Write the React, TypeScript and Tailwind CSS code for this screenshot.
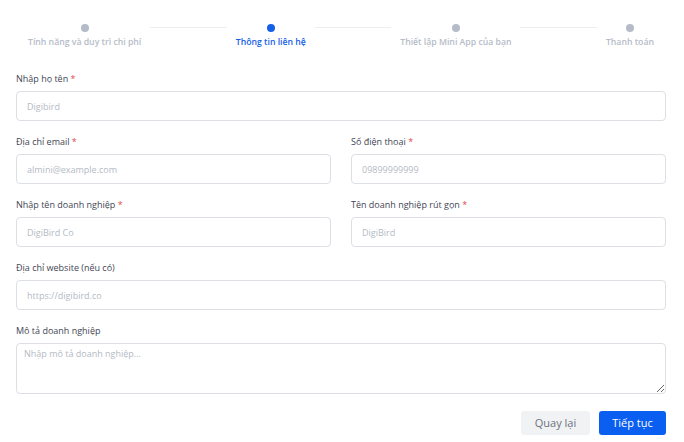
const steps = [
  { label: "Tính năng và duy trì chi phí", active: false },
  { label: "Thông tin liên hệ", active: true },
  { label: "Thiết lập Mini App của bạn", active: false },
  { label: "Thanh toán", active: false },
];

function Field({
  label,
  placeholder,
  required,
}: {
  label: string;
  placeholder: string;
  required?: boolean;
}) {
  return (
    <div className="flex flex-col">
      <label className="text-[9px] leading-[12px] text-[#3f4654] mb-[6px]">
        {label}
        {required && <span className="text-[#e5484d]"> *</span>}
      </label>
      <input
        placeholder={placeholder}
        className="h-[30px] w-full rounded-[4px] border border-[#dcdfe4] bg-white px-[10px] text-[9px] text-[#3f4654] placeholder:text-[#b4bac5] outline-none"
      />
    </div>
  );
}

export default function App() {
  return (
    <div
      className="w-[684px] h-[442px] bg-white pl-4 pr-[18px] overflow-hidden"
      style={{ fontFamily: '"Open Sans", "Noto Sans", sans-serif' }}
    >
      <div className="flex items-start pl-3 pr-[12px] pt-6">
        {steps.map((step, i) => (
          <div key={step.label} className="contents">
            <div className="flex flex-col items-center">
              <div
                className={
                  step.active
                    ? "w-2 h-2 rounded-full bg-[#1560e8]"
                    : "w-2 h-2 rounded-full bg-[#b5bcc8]"
                }
              />
              <span
                className={
                  step.active
                    ? "mt-1 text-[8.7px] leading-[12px] font-semibold text-[#1560e8] whitespace-nowrap"
                    : "mt-1 text-[8.7px] leading-[12px] font-semibold text-[#b5bcc8] whitespace-nowrap"
                }
              >
                {step.label}
              </span>
            </div>
            {i < steps.length - 1 && (
              <div className="flex-1 h-px bg-[#eceef1] mx-[9px] mt-[3px]" />
            )}
          </div>
        ))}
      </div>

      <div className="mt-[25px] flex flex-col gap-[15px]">
        <Field label="Nhập họ tên" placeholder="Digibird" required />
        <div className="grid grid-cols-2 gap-x-5">
          <Field label="Địa chỉ email" placeholder="almini@example.com" required />
          <Field label="Số điện thoại" placeholder="09899999999" required />
        </div>
        <div className="grid grid-cols-2 gap-x-5">
          <Field label="Nhập tên doanh nghiệp" placeholder="DigiBird Co" required />
          <Field label="Tên doanh nghiệp rút gọn" placeholder="DigiBird" required />
        </div>
        <Field label="Địa chỉ website (nếu có)" placeholder="https://digibird.co" />
        <div className="flex flex-col">
          <label className="text-[9px] leading-[12px] text-[#3f4654] mb-[6px]">
            Mô tả doanh nghiệp
          </label>
          <textarea
            placeholder="Nhập mô tả doanh nghiệp..."
            className="h-[51px] w-full rounded-[4px] border border-[#dcdfe4] bg-white px-[7px] py-[3px] text-[9px] text-[#3f4654] placeholder:text-[#b4bac5] outline-none resize-y"
          />
        </div>
      </div>

      <div className="mt-[17px] flex justify-end gap-[9px]">
        <button className="h-[24px] w-[69px] rounded-[3px] bg-[#f1f2f4] text-[11px] text-[#6b7280]">
          Quay lại
        </button>
        <button className="h-[24px] w-[67px] rounded-[3px] bg-[#0a5ff0] text-[11px] font-medium text-white">
          Tiếp tục
        </button>
      </div>
    </div>
  );
}
